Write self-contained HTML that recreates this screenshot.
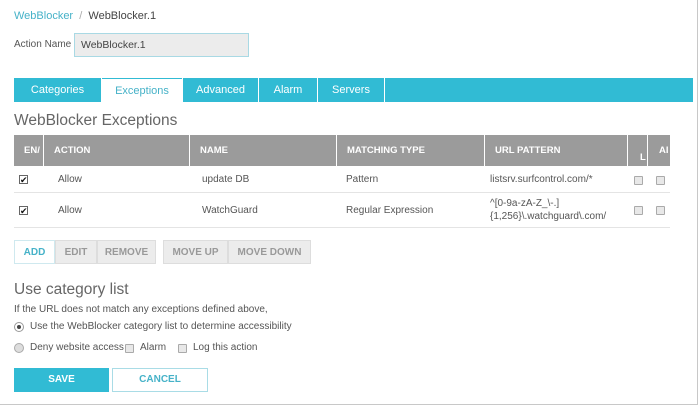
<!DOCTYPE html>
<html><head><style>
*{margin:0;padding:0;box-sizing:border-box}
body{width:700px;height:406px;background:#fff;font-family:"Liberation Sans",sans-serif;font-size:10.5px;color:#444;position:relative;overflow:hidden}
.a{position:absolute;white-space:nowrap}
.frame{position:absolute;left:0;top:0;width:698px;height:405px;border:1px solid #c8c8c8;border-left:none;border-top:none}
.tab{position:absolute;top:78px;height:24px;background:#31bbd4;color:#fff;font-size:11px;display:flex;align-items:center;justify-content:center}
.th{position:absolute;top:135px;height:31px;background:#9b9b9b;color:#fff;font-weight:bold;font-size:9.5px;line-height:31px;padding-left:10px}
.cb{position:absolute;width:9px;height:9px;border:1px solid #aaa;background:#e8e8e8;border-radius:1px}
.ck{position:absolute;width:9px;height:9px;border:1px solid #666;background:#fff;font-size:9px;line-height:8px;text-align:center;color:#111}
.btn{position:absolute;top:240px;height:24px;background:#ececec;border:1px solid #ddd;color:#999;font-size:10px;font-weight:bold;display:flex;align-items:center;justify-content:center}
.rd{position:absolute;width:10px;height:10px;border-radius:50%;border:1px solid #aaa;background:#ddd}
.t{font-size:10px;color:#555}
</style></head><body>
<div class="frame"></div>
<div class="a" style="left:14px;top:10px;font-size:11px"><span style="color:#46b2c8">WebBlocker</span><span style="color:#aaa">&nbsp; / &nbsp;</span><span style="color:#444">WebBlocker.1</span></div>
<div class="a" style="left:14px;top:39px;color:#555;font-size:10px">Action Name</div>
<div class="a" style="left:74px;top:33px;width:175px;height:24px;background:#ececec;border:1px solid #a9d9e4;padding-left:6px;line-height:22px;color:#444;font-size:10.5px">WebBlocker.1</div>

<div class="tab" style="left:14px;width:87px">Categories</div>
<div class="tab" style="left:102px;width:80px;background:#fff;color:#46b2c8;border-top:1px solid #31bbd4">Exceptions</div>
<div class="tab" style="left:183px;width:75px">Advanced</div>
<div class="tab" style="left:259px;width:58px">Alarm</div>
<div class="tab" style="left:318px;width:66px">Servers</div>
<div class="tab" style="left:385px;width:308px"></div>

<div class="a" style="left:14px;top:112px;font-size:15.5px;color:#666">WebBlocker Exceptions</div>

<div class="th" style="left:14px;width:29px;padding-left:10px">EN/</div>
<div class="th" style="left:44px;width:145px">ACTION</div>
<div class="th" style="left:190px;width:146px">NAME</div>
<div class="th" style="left:337px;width:147px">MATCHING TYPE</div>
<div class="th" style="left:485px;width:142px">URL PATTERN</div>
<div class="th" style="left:628px;width:19px;padding-left:12px;line-height:46px;overflow:hidden">L</div>
<div class="th" style="left:648px;width:22px;padding-left:11px;overflow:hidden">AI</div>

<div class="a" style="left:14px;top:192px;width:656px;height:1px;background:#e4e4e4"></div>
<div class="a" style="left:14px;top:227px;width:656px;height:1px;background:#e4e4e4"></div>

<div class="ck" style="left:19px;top:175px">✔</div>
<div class="a t" style="left:58px;top:174px">Allow</div>
<div class="a t" style="left:202px;top:174px">update DB</div>
<div class="a t" style="left:346px;top:174px">Pattern</div>
<div class="a t" style="left:490px;top:174px">listsrv.surfcontrol.com/*</div>
<div class="cb" style="left:634px;top:176px"></div>
<div class="cb" style="left:656px;top:176px"></div>

<div class="ck" style="left:19px;top:206px">✔</div>
<div class="a t" style="left:58px;top:205px">Allow</div>
<div class="a t" style="left:202px;top:205px">WatchGuard</div>
<div class="a t" style="left:346px;top:205px">Regular Expression</div>
<div class="a t" style="left:490px;top:197px;line-height:13px">^[0-9a-zA-Z_\-.]<br>{1,256}\.watchguard\.com/</div>
<div class="cb" style="left:634px;top:206px"></div>
<div class="cb" style="left:656px;top:206px"></div>

<div class="btn" style="left:14px;width:41px;background:#fff;border-color:#cfe9ef;color:#46b2c8">ADD</div>
<div class="btn" style="left:55px;width:42px">EDIT</div>
<div class="btn" style="left:97px;width:59px">REMOVE</div>
<div class="btn" style="left:163px;width:65px">MOVE UP</div>
<div class="btn" style="left:228px;width:83px">MOVE DOWN</div>

<div class="a" style="left:14px;top:281px;font-size:15.5px;color:#666">Use category list</div>
<div class="a t" style="left:14px;top:304px">If the URL does not match any exceptions defined above,</div>
<div class="rd" style="left:14px;top:322px;background:#fff;border-color:#999"><div style="position:absolute;left:2px;top:2px;width:4px;height:4px;border-radius:50%;background:#444"></div></div>
<div class="a t" style="left:30px;top:321px">Use the WebBlocker category list to determine accessibility</div>
<div class="rd" style="left:14px;top:343px"></div>
<div class="a t" style="left:30px;top:342px">Deny website access</div>
<div class="cb" style="left:125px;top:344px"></div>
<div class="a t" style="left:140px;top:342px">Alarm</div>
<div class="cb" style="left:178px;top:344px"></div>
<div class="a t" style="left:193px;top:342px">Log this action</div>

<div class="a" style="left:14px;top:368px;width:95px;height:24px;background:#31bbd4;color:#fff;font-weight:bold;font-size:10px;text-align:center;line-height:24px">SAVE</div>
<div class="a" style="left:112px;top:368px;width:96px;height:24px;border:1px solid #a9dce6;color:#46b2c8;font-weight:bold;font-size:10px;text-align:center;line-height:22px">CANCEL</div>
</body></html>
